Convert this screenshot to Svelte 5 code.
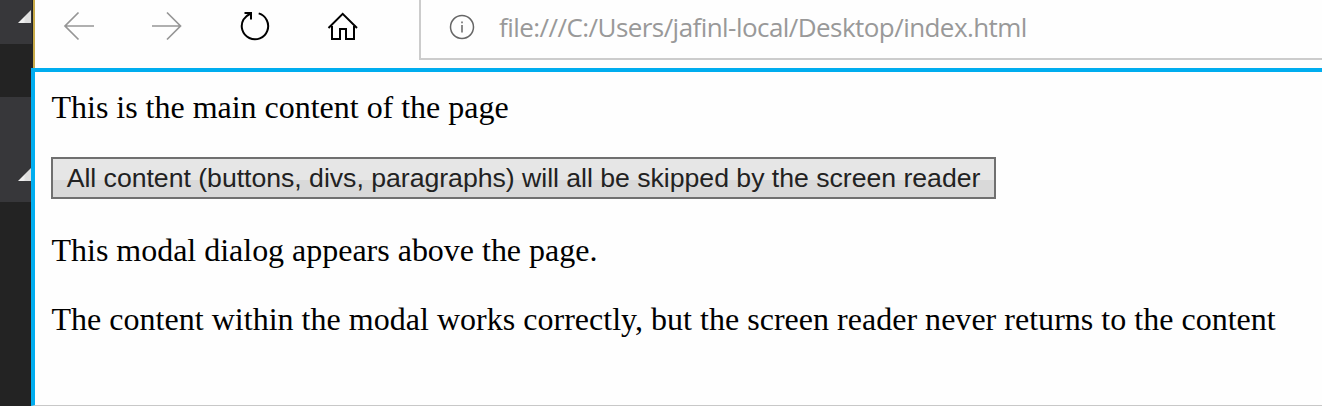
<script>
  const paragraphs = [
    'This modal dialog appears above the page.',
    'The content within the modal works correctly, but the screen reader never returns to the content'
  ];
</script>

<div class="screen">
  <aside>
    <div class="tile first"><i></i></div>
    <div class="tile second"><i></i></div>
  </aside>
  <div class="browser">
    <nav>
      <svg class="icons" width="384" height="68" viewBox="0 0 384 68" fill="none">
        <g stroke="#969696" stroke-width="1.7">
          <path d="M59 26H31M43.500 12.500L30 26L43.500 39.500" />
          <path d="M117 26H145M132 12.500L145.500 26L132 39.500" />
        </g>
        <g stroke="#000" stroke-width="2">
          <path d="M223.700 13.400A13.200 13.200 0 1 1 208.500 19.500Q211.500 15.500 215.500 13.500" />
          <path d="M209.500 13H216V19.500" />
          <path d="M293.500 28L307.700 13.800L322 28M297 26V39H305V29H311V39H319V26" />
        </g>
      </svg>
      <div class="address">
        <svg width="26" height="26" viewBox="0 0 26 26" fill="none" stroke="#666" stroke-width="1.5">
          <circle cx="13" cy="13" r="11.500" />
          <path d="M13 11V18.500M13 7.500V9.300" />
        </svg>
        <span>file:///C:/Users/jafinl-local/Desktop/index.html</span>
      </div>
    </nav>
    <main>
      <p class="intro">This is the main content of the page</p>
      <button>All content (buttons, divs, paragraphs) will all be skipped by the screen reader</button>
      {#each paragraphs as text, n}
        <p class:wide={n === 1}>{text}</p>
      {/each}
    </main>
  </div>
</div>

<style>
  .screen {
    display: flex;
    width: 1322px;
    height: 406px;
    overflow: hidden;
    background: #fefefe;
  }
  aside {
    width: 31px;
    flex: none;
    background: #232323;
    box-shadow: 2px 0 #232323;
  }
  .tile {
    background: #37373a;
    display: flex;
    justify-content: flex-end;
    box-sizing: border-box;
    width: 32px;
    padding-right: 1px;
  }
  .first {
    height: 44px;
    padding-top: 10px;
  }
  .second {
    height: 105px;
    margin-top: 53px;
    padding-top: 78px;
    padding-top: 71px;
  }
  i {
    width: 13px;
    height: 13px;
    background: linear-gradient(90deg, #f0f0f0 40%, #dedede 60%);
    clip-path: polygon(100% 0, 100% 100%, 0 100%);
  }
  .browser {
    flex: 1;
    min-width: 0;
    position: relative;
  }
  nav {
    box-sizing: border-box;
    height: 68px;
    margin-left: 2px;
    border-left: 2px solid #c8aa48;
    display: flex;
    background: #fefefe;
  }
  .icons {
    flex: none;
    width: 384px;
  }
  .address {
    box-sizing: border-box;
    flex: 1;
    height: 60px;
    border-left: 2px solid #ccc;
    border-bottom: 2px solid #ccc;
    display: flex;
    align-items: flex-start;
    padding: 14px 0 0 28px;
  }
  .address span {
    margin: -5px 0 0 24px;
    font: 26px/36px 'Open Sans', sans-serif;
    letter-spacing: -0.56px;
    color: #999;
    white-space: nowrap;
  }
  main {
    box-sizing: border-box;
    height: 338px;
    border-top: 4px solid #00adef;
    border-left: 4px solid #00adef;
    border-bottom: 1px solid #c8c8c8;
    padding: 17px 0 0 16px;
    background: #fefefe;
  }
  p {
    margin: 0 0 33px;
    padding-left: 0.5px;
    font: 32px/36px 'Liberation Serif', serif;
    letter-spacing: -0.015px;
    color: #000;
    white-space: nowrap;
  }
  .intro {
    margin-bottom: 32px;
  }
  .wide {
    letter-spacing: 0.02px;
  }
  button {
    display: block;
    box-sizing: border-box;
    width: 945px;
    height: 42px;
    margin: 0 0 33px;
    padding: 0;
    border: 2px solid #707070;
    border-radius: 0;
    background: linear-gradient(#e6e6e6 55%, #d9d9d9 55%);
    color: #222;
    font: 26.667px/38px 'Liberation Sans', sans-serif;
    letter-spacing: -0.025px;
    white-space: nowrap;
  }
</style>
